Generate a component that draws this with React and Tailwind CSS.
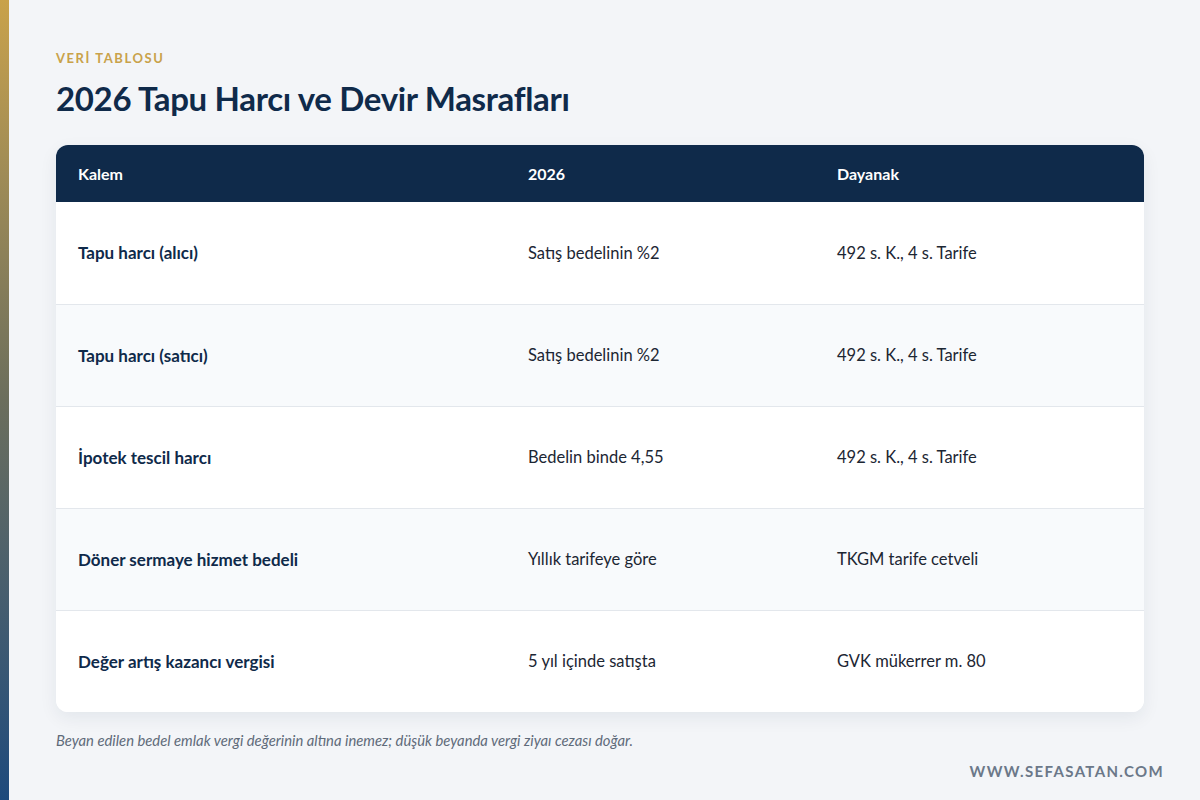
import React from "react";

const rows = [
  { kalem: "Tapu harcı (alıcı)", year: "Satış bedelinin %2", dayanak: "492 s. K., 4 s. Tarife" },
  { kalem: "Tapu harcı (satıcı)", year: "Satış bedelinin %2", dayanak: "492 s. K., 4 s. Tarife" },
  { kalem: "İpotek tescil harcı", year: "Bedelin binde 4,55", dayanak: "492 s. K., 4 s. Tarife" },
  { kalem: "Döner sermaye hizmet bedeli", year: "Yıllık tarifeye göre", dayanak: "TKGM tarife cetveli" },
  { kalem: "Değer artış kazancı vergisi", year: "5 yıl içinde satışta", dayanak: "GVK mükerrer m. 80" },
];

const App = () => {
  return (
    <div
      className="flex w-[1200px] h-[800px] bg-[#f3f5f8] overflow-hidden"
      style={{ fontFamily: "Lato, 'Noto Sans', sans-serif" }}
    >
      <div className="w-[9px] shrink-0 bg-gradient-to-b from-[#c9a24a] via-[#6b6e5c] to-[#1d4a7c]" />

      <div className="flex-1 flex flex-col pl-[47px] pr-[56px]">
        <div className="pt-[50px] text-[13px] font-bold tracking-[0.12em] text-[#c9a24a] leading-[16px]">
          VERİ TABLOSU
        </div>
        <h1 className="mt-[12px] text-[33px] font-bold text-[#0f2a4a] leading-[40px] tracking-[-0.01em]">
          2026 Tapu Harcı ve Devir Masrafları
        </h1>

        <div className="mt-[27px] rounded-[12px] bg-white shadow-[0_6px_18px_rgba(15,42,74,0.07)] overflow-hidden">
          <div className="grid grid-cols-[450px_309px_1fr] h-[57px] items-center bg-[#0f2a4a] text-white text-[16px] font-bold">
            <div className="pl-[22px]">Kalem</div>
            <div className="pl-[22px]">2026</div>
            <div className="pl-[22px]">Dayanak</div>
          </div>
          {rows.map((r, i) => (
            <div
              key={i}
              className={
                "grid grid-cols-[450px_309px_1fr] items-center h-[102px] text-[16.5px] text-[#1c2633] " +
                (i % 2 === 1 ? "bg-[#f8fafc] " : "bg-white ") +
                (i > 0 ? "border-t border-[#e3e7ec]" : "")
              }
            >
              <div className="pl-[22px] text-[17px] font-bold text-[#0f2a4a]">{r.kalem}</div>
              <div className="pl-[22px]">{r.year}</div>
              <div className="pl-[22px]">{r.dayanak}</div>
            </div>
          ))}
        </div>

        <p className="mt-[18px] text-[14.8px] italic text-[#5f6b7a] leading-[20px]">
          Beyan edilen bedel emlak vergi değerinin altına inemez; düşük beyanda vergi ziyaı cezası doğar.
        </p>

        <div className="mt-[10px] -mr-[20px] text-right text-[15px] font-bold tracking-[0.09em] text-[#6b7889]">
          WWW.SEFASATAN.COM
        </div>
      </div>
    </div>
  );
};

export default App;
